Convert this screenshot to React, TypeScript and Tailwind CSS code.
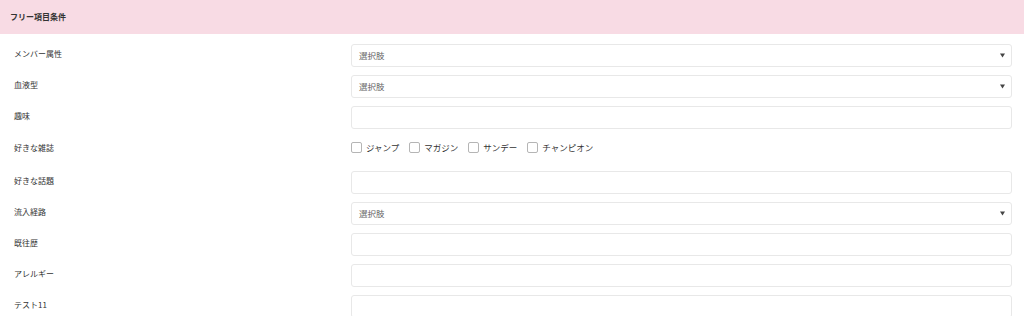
const FONT = { fontFamily: '"Noto Sans CJK JP", "Noto Sans", sans-serif' }

type Field =
  | { label: string; kind: 'select' }
  | { label: string; kind: 'text' }
  | { label: string; kind: 'check'; options: string[] }

const FIELDS: Field[] = [
  { label: 'メンバー属性', kind: 'select' },
  { label: '血液型', kind: 'select' },
  { label: '趣味', kind: 'text' },
  { label: '好きな雑誌', kind: 'check', options: ['ジャンプ', 'マガジン', 'サンデー', 'チャンピオン'] },
  { label: '好きな話題', kind: 'text' },
  { label: '流入経路', kind: 'select' },
  { label: '既往歴', kind: 'text' },
  { label: 'アレルギー', kind: 'text' },
  { label: 'テスト11', kind: 'text' },
]

function SelectBox() {
  return (
    <div className="h-[23px] w-full border border-[#e8e8e8] rounded-[3px] bg-white flex items-center pl-[7px] pr-[6px]">
      <span className="text-[8.5px] text-[#666] flex-1">選択肢</span>
      <svg width="5" height="5" viewBox="0 0 5 5">
        <polygon points="0,0.5 5,0.5 2.5,4.5" fill="#444" />
      </svg>
    </div>
  )
}

function TextBox() {
  return <div className="h-[23px] w-full border border-[#e8e8e8] rounded-[3px] bg-white" />
}

function CheckGroup({ options }: { options: string[] }) {
  return (
    <div className="flex items-center gap-[10px] mt-[5px]">
      {options.map((o) => (
        <label key={o} className="flex items-center gap-[4px]">
          <span className="w-[11px] h-[11px] border border-[#b5b5b5] rounded-[2px] bg-white" />
          <span className="text-[8.5px] text-[#333] leading-[11px]">{o}</span>
        </label>
      ))}
    </div>
  )
}

export default function App() {
  return (
    <div className="w-[1024px] h-[316px] bg-white overflow-hidden" style={FONT}>
      {/* header */}
      <div className="h-[34px] bg-[#f8dbe4] flex items-center pl-[10px]">
        <span className="text-[8px] font-bold text-[#333]">フリー項目条件</span>
      </div>

      {/* rows */}
      <div className="pt-[10px] flex flex-col gap-[8px]">
        {FIELDS.map((f) => (
          <div key={f.label} className={`flex items-start pl-[14px] pr-[12px] ${f.kind === 'check' ? 'h-[26px]' : 'h-[23px]'}`}>
            <div className={`w-[337px] text-[8px] leading-[12px] text-[#333] ${f.kind === 'check' ? 'pt-[5px]' : 'pt-[4px]'}`}>
              {f.label}
            </div>
            <div className="flex-1">
              {f.kind === 'select' && <SelectBox />}
              {f.kind === 'text' && <TextBox />}
              {f.kind === 'check' && <CheckGroup options={f.options} />}
            </div>
          </div>
        ))}
      </div>
    </div>
  )
}
